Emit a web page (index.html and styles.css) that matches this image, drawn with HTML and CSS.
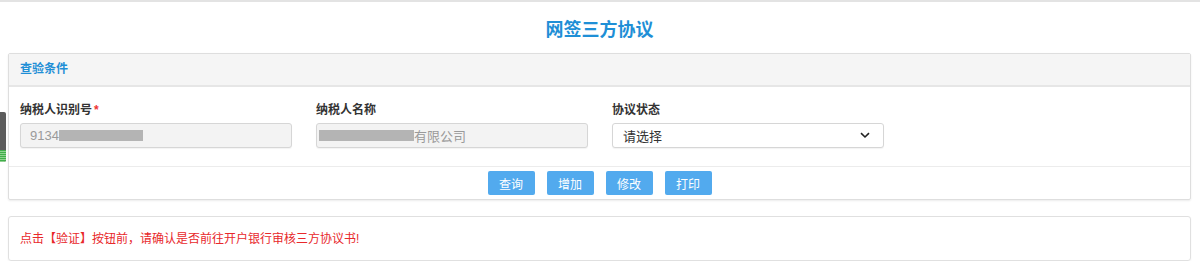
FILE: index.html
```html
<!DOCTYPE html>
<html lang="zh">
<head>
<meta charset="utf-8">
<title>网签三方协议</title>
<link rel="stylesheet" href="styles.css">
</head>
<body>
<div class="topline"></div>
<div class="side-tab"><span class="side-green"></span></div>
<div class="page">
  <h1 class="title">网签三方协议</h1>
  <div class="panel">
    <div class="panel-head">查验条件</div>
    <div class="panel-body">
      <div class="field">
        <label class="label">纳税人识别号<span class="req">*</span></label>
        <div class="input readonly"><span class="txt">9134</span><span class="mask mask1"></span></div>
      </div>
      <div class="field">
        <label class="label">纳税人名称</label>
        <div class="input readonly name"><span class="mask mask2"></span><span class="txt">有限公司</span></div>
      </div>
      <div class="field">
        <label class="label">协议状态</label>
        <div class="input select"><span class="txt dark">请选择</span>
          <svg class="chev" width="10" height="7" viewBox="0 0 10 7"><path d="M1 1.2 L5 5 L9 1.2" fill="none" stroke="#222" stroke-width="1.6"/></svg>
        </div>
      </div>
    </div>
    <div class="panel-foot">
      <button class="btn">查询</button>
      <button class="btn">增加</button>
      <button class="btn">修改</button>
      <button class="btn">打印</button>
    </div>
  </div>
  <div class="notice">点击【验证】按钮前，请确认是否前往开户银行审核三方协议书!</div>
</div>
</body>
</html>
```
FILE: styles.css
```css
html, body {
  margin: 0;
  padding: 0;
  background: #fff;
  font-family: "Liberation Sans", "Noto Sans CJK SC", sans-serif;
  font-size: 12px;
  color: #333;
}
.topline {
  height: 2px;
  background: #e3e3e3;
}
.side-tab {
  position: absolute;
  left: 0;
  top: 112px;
  width: 6px;
  height: 50px;
  background: #5c5c5c;
  border-radius: 0 2px 2px 0;
  overflow: hidden;
}
.side-green {
  position: absolute;
  left: 0;
  bottom: 0;
  width: 6px;
  height: 12px;
  background: repeating-linear-gradient(#3fae4a 0 1px, #8fd18f 1px 2px);
}
.page {
  padding: 0 9px 0 8px;
}
.title {
  margin: 0;
  height: 51px;
  line-height: 57px;
  text-align: center;
  font-size: 18px;
  font-weight: bold;
  color: #1f8fd6;
}
.panel {
  border: 1px solid #dedede;
  border-radius: 2px;
  box-shadow: 0 1px 2px rgba(0,0,0,0.08);
}
.panel-head {
  height: 31px;
  line-height: 31px;
  padding: 0 11px;
  background: #f5f5f5;
  border-bottom: 2px solid #e6e6e6;
  color: #1f8fd6;
  font-weight: bold;
  font-size: 12px;
}
.panel-body {
  display: flex;
  gap: 24px;
  padding: 15px 11px 18px;
  border-bottom: 1px solid #ececec;
}
.field {
  width: 272px;
  display: flex;
  flex-direction: column;
  gap: 5px;
}
.label {
  font-weight: bold;
  color: #333;
  height: 16px;
  line-height: 16px;
}
.req {
  color: #e33;
  margin-left: 2px;
}
.input {
  height: 23px;
  border: 1px solid #d6d6d6;
  border-radius: 3px;
  display: flex;
  align-items: center;
  padding: 0 10px;
  box-shadow: 0 1px 1px rgba(0,0,0,0.05);
}
.readonly {
  background: #f3f3f3;
  padding-left: 9px;
}
.readonly.name {
  padding-left: 2px;
}
.txt {
  color: #9a9a9a;
  font-size: 13px;
}
.txt.dark {
  color: #333;
}
.mask {
  display: inline-block;
  height: 11px;
  background: #b4b4b4;
}
.mask1 { width: 84px; }
.mask2 { width: 95px; }
.select {
  background: #fff;
  justify-content: space-between;
  padding-right: 13px;
}
.panel-foot {
  display: flex;
  justify-content: center;
  gap: 12px;
  padding: 4px 0 4px;
}
.btn {
  width: 47px;
  height: 24px;
  border: none;
  border-radius: 2px;
  background: #52aaee;
  color: #fff;
  font-family: "Liberation Sans", "Noto Sans CJK SC", sans-serif;
  font-size: 12px;
  padding: 0;
}
.notice {
  margin-top: 16px;
  border: 1px solid #e0e0e0;
  border-radius: 3px;
  height: 43px;
  line-height: 45px;
  padding: 0 11px;
  color: #e8282b;
  font-size: 12px;
  box-shadow: 0 1px 2px rgba(0,0,0,0.06);
}
```
